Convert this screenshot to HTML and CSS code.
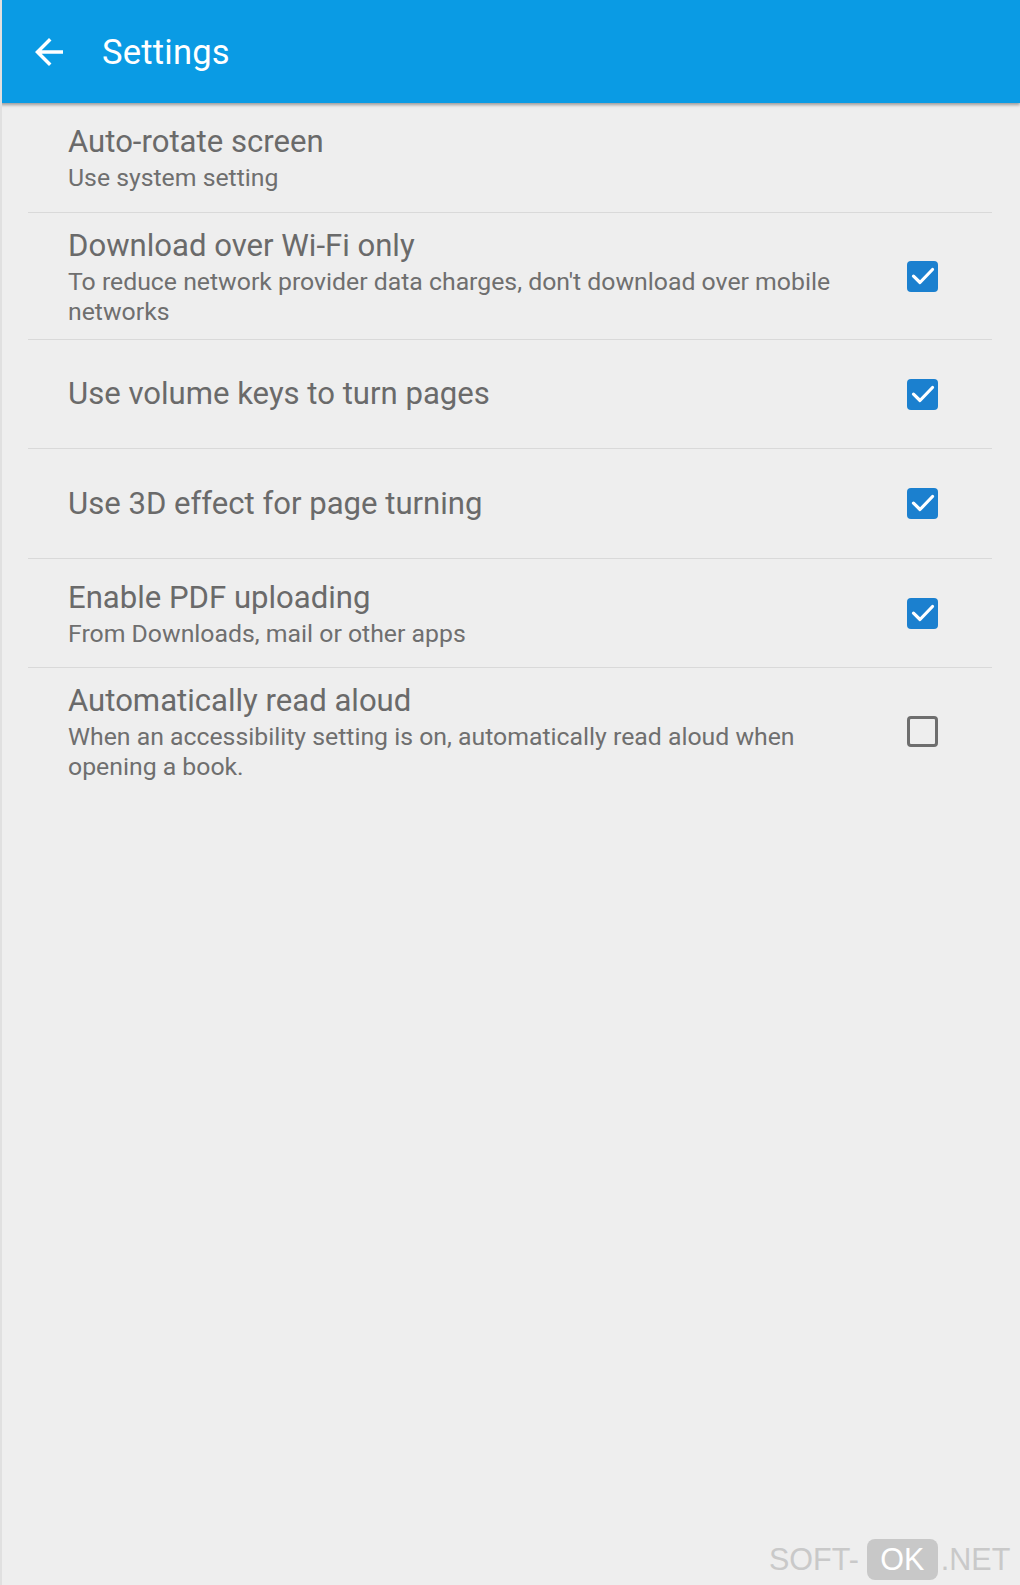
FILE: index.html
```html
<!DOCTYPE html>
<html lang="en">
<head>
<meta charset="utf-8">
<title>Settings</title>
<link rel="stylesheet" href="styles.css">
</head>
<body>
<header class="appbar">
  <svg class="back" viewBox="0 0 24 24" width="42" height="42"><path d="M20 11H7.83l5.59-5.59L12 4l-8 8 8 8 1.41-1.41L7.83 13H20v-2z" fill="#fff"/></svg>
  <h1 class="appbar-title">Settings</h1>
</header>
<main class="content">
  <ul class="list">
    <li class="row row-1">
      <div class="text">
        <div class="title">Auto-rotate screen</div>
        <div class="sub">Use system setting</div>
      </div>
    </li>
    <li class="row row-2">
      <div class="text">
        <div class="title">Download over Wi-Fi only</div>
        <div class="sub">To reduce network provider data charges, don't download over mobile networks</div>
      </div>
      <span class="cb checked"><svg viewBox="0 0 31 31" width="31" height="31"><path d="M6.5 15.2 L13 21.5 L25.5 8.5" fill="none" stroke="#fff" stroke-width="3.2" stroke-linecap="round" stroke-linejoin="round"/></svg></span>
    </li>
    <li class="row row-3">
      <div class="text">
        <div class="title">Use volume keys to turn pages</div>
      </div>
      <span class="cb checked"><svg viewBox="0 0 31 31" width="31" height="31"><path d="M6.5 15.2 L13 21.5 L25.5 8.5" fill="none" stroke="#fff" stroke-width="3.2" stroke-linecap="round" stroke-linejoin="round"/></svg></span>
    </li>
    <li class="row row-4">
      <div class="text">
        <div class="title">Use 3D effect for page turning</div>
      </div>
      <span class="cb checked"><svg viewBox="0 0 31 31" width="31" height="31"><path d="M6.5 15.2 L13 21.5 L25.5 8.5" fill="none" stroke="#fff" stroke-width="3.2" stroke-linecap="round" stroke-linejoin="round"/></svg></span>
    </li>
    <li class="row row-5">
      <div class="text">
        <div class="title">Enable PDF uploading</div>
        <div class="sub">From Downloads, mail or other apps</div>
      </div>
      <span class="cb checked"><svg viewBox="0 0 31 31" width="31" height="31"><path d="M6.5 15.2 L13 21.5 L25.5 8.5" fill="none" stroke="#fff" stroke-width="3.2" stroke-linecap="round" stroke-linejoin="round"/></svg></span>
    </li>
    <li class="row row-6 last">
      <div class="text">
        <div class="title">Automatically read aloud</div>
        <div class="sub">When an accessibility setting is on, automatically read aloud when opening a book.</div>
      </div>
      <span class="cb unchecked"></span>
    </li>
  </ul>
</main>
<div class="watermark"><span class="wm-text">SOFT-</span><span class="wm-box">OK</span><span class="wm-text">.NET</span></div>
</body>
</html>
```
FILE: styles.css
```css
* { box-sizing: border-box; }
html, body {
  margin: 0;
  padding: 0;
  background: #eeeeee;
  width: 1020px;
  height: 1585px;
  overflow: hidden;
}
body {
  font-family: Roboto, "Noto Sans", "Liberation Sans", sans-serif;
  position: relative;
  border-left: 2px solid #e0e0e0;
}
.appbar {
  height: 103px;
  background: #0a9be4;
  display: flex;
  align-items: center;
  padding-left: 28px;
  box-shadow: 0 2px 3px rgba(0,0,0,0.35);
  position: relative;
  z-index: 1;
  margin-left: -2px;
}
.back { display: block; flex: none; }
.appbar-title {
  margin: 0 0 0 32px;
  font-weight: 400;
  font-size: 34.6px;
  color: #ffffff;
  letter-spacing: 0.2px;
}
.content { padding: 0 28px 0 26px; }
.list { list-style: none; margin: 0; padding: 0; }
.row {
  display: flex;
  align-items: center;
  padding: 0 54px 0 40px;
  border-bottom: 1px solid #d9d9d9;
}
.row.last { border-bottom: none; }
.row-1 { height: 110px; }
.row-2 { height: 127px; }
.row-3 { height: 109px; }
.row-4 { height: 110px; }
.row-5 { height: 109px; }
.row-6 { padding-top: 13px; padding-bottom: 14px; }
.text { flex: 1; padding-right: 40px; }
.title {
  font-size: 31.1px;
  line-height: 40px;
  color: #6a6a6a;
}
.sub {
  font-size: 24.8px;
  line-height: 29.5px;
  color: #6f6f6f;
  margin-top: 1px;
}
.cb {
  flex: none;
  width: 31px;
  height: 31px;
  border-radius: 4px;
  display: block;
}
.cb svg { display: block; }
.cb.checked { background: #1b80cf; }
.cb.unchecked { border: 3px solid #6e6e6e; border-radius: 4px; }
.watermark {
  position: absolute;
  left: 767px;
  top: 1539px;
  display: flex;
  align-items: center;
  font-family: "Liberation Sans", Arial, sans-serif;
  font-size: 30.5px;
  color: #c9c9c9;
  height: 41px;
}
.wm-box {
  background: #c8c8c8;
  color: #ffffff;
  border-radius: 8px;
  height: 41px;
  width: 71px;
  display: flex;
  align-items: center;
  justify-content: center;
  margin: 0 3px 0 8px;
}
```
